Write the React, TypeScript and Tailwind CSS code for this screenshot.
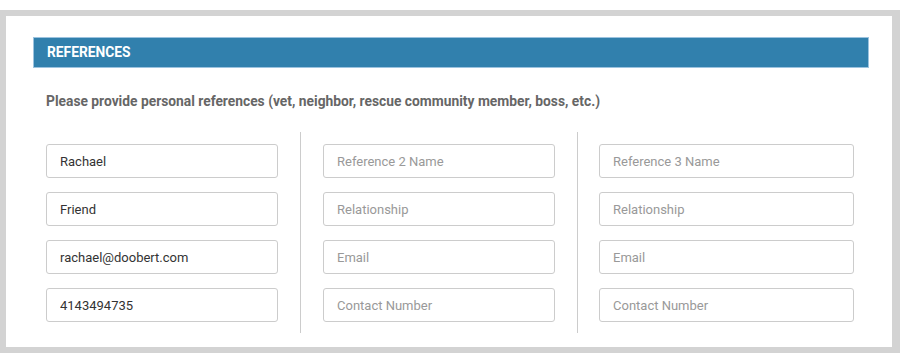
import React from "react";

const cols = [
  ["Rachael", "Friend", "rachael@doobert.com", "4143494735"],
  ["", "", "", ""],
  ["", "", "", ""],
];
const placeholders = [
  ["Reference 1 Name", "Relationship", "Email", "Contact Number"],
  ["Reference 2 Name", "Relationship", "Email", "Contact Number"],
  ["Reference 3 Name", "Relationship", "Email", "Contact Number"],
];

function Field({ value, placeholder, w }: { value: string; placeholder: string; w: string }) {
  return (
    <input
      readOnly
      value={value}
      placeholder={placeholder}
      className={`${w} h-[34px] rounded-[3px] border border-[#cccccc] bg-white px-[13px] text-[13px] text-[#333333] placeholder:text-[#999999] outline-none`}
    />
  );
}

export default function App() {
  return (
    <div className="h-[364px] w-[900px] bg-white pt-[10px] font-['Roboto',sans-serif]">
      <div className="h-[343px] w-[900px] border-[6px] border-r-[8px] border-[#d3d3d3] bg-white pl-[27px] pr-[23px] pt-[21px]">
        <div className="flex h-[31px] items-center border border-[#9cc3df] bg-[#3180ad] pl-[13px] text-[13.8px] font-bold text-white">
          REFERENCES
        </div>
        <div className="pl-[13px] pt-[24px] text-[13.8px] font-bold leading-[18px] text-[#666666]">
          Please provide personal references (vet, neighbor, rescue community member, boss, etc.)
        </div>
        <div className="mt-[22px] flex">
          <div className="flex w-[268px] flex-col gap-[14px] border-r border-[#cccccc] pl-[13px] pr-[22px] pt-[12px] pb-[11px]">
            {cols[0].map((v, i) => (
              <Field key={i} value={v} placeholder={placeholders[0][i]} w="w-[232px]" />
            ))}
          </div>
          <div className="flex w-[277px] flex-col gap-[14px] border-r border-[#cccccc] pl-[22px] pr-[22px] pt-[12px] pb-[11px]">
            {cols[1].map((v, i) => (
              <Field key={i} value={v} placeholder={placeholders[1][i]} w="w-[232px]" />
            ))}
          </div>
          <div className="flex flex-col gap-[14px] pl-[21px] pt-[12px] pb-[11px]">
            {cols[2].map((v, i) => (
              <Field key={i} value={v} placeholder={placeholders[2][i]} w="w-[255px]" />
            ))}
          </div>
        </div>
      </div>
    </div>
  );
}
